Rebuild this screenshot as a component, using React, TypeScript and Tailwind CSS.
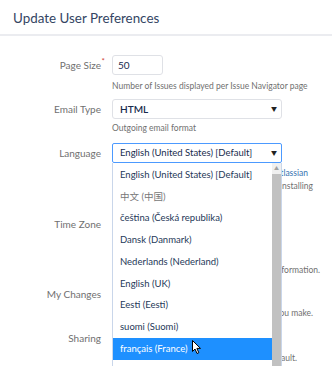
import React from 'react'

const languages = [
  'English (United States) [Default]',
  '中文 (中国)',
  'čeština (Česká republika)',
  'Dansk (Danmark)',
  'Nederlands (Nederland)',
  'English (UK)',
  'Eesti (Eesti)',
  'suomi (Suomi)',
  'français (France)',
  'Deutsch (Deutschland)',
]

function Arrow() {
  return <span className="text-[6px] leading-none text-[#222]">▼</span>
}

function Row({ label, required, children, className = '' }: { label: string; required?: boolean; children?: React.ReactNode; className?: string }) {
  return (
    <div className={`flex items-center ${className}`}>
      <div className="relative w-[101px] shrink-0 text-right text-[10px] text-[#707070]">
        {label}
        {required && <span className="absolute -right-[4px] -top-[3px] text-[8px] text-[#d04437]">*</span>}
      </div>
      <div className="ml-[11px] flex-1">{children}</div>
    </div>
  )
}

function Help({ children, className = '' }: { children: React.ReactNode; className?: string }) {
  return <div className={`ml-[112px] whitespace-nowrap text-[8.5px] leading-[13px] text-[#707070] ${className}`}>{children}</div>
}

export default function App() {
  return (
    <main className="relative h-[366px] w-[332px] overflow-hidden bg-white text-[#172b4d]" style={{ fontFamily: 'Lato, "Noto Sans", "Noto Sans CJK SC", sans-serif' }}>
      <header className="h-[36px] border-b-2 border-[#ebecf0] pl-[13px] pt-[8px]">
        <h1 className="text-[13.4px] leading-[20px] text-[#344563]">Update User Preferences</h1>
      </header>

      <form>
        <Row label="Page Size" required className="mt-[19px]">
          <div className="flex h-[20px] w-[51px] items-center rounded-[3px] border border-[#dfe1e6] px-[5px] text-[10px]">50</div>
        </Row>
        <Help className="mt-[5px]">Number of Issues displayed per Issue Navigator page</Help>

        <Row label="Email Type" className="mt-[6px]">
          <div className="flex h-[20px] w-[170px] items-center justify-between rounded-[3px] border border-[#dfe1e6] pl-[7px] pr-[4px] text-[10px] font-semibold">
            HTML <Arrow />
          </div>
        </Row>
        <Help className="mt-[3px]">Outgoing email format</Help>

        <Row label="Language" className="mt-[8px]">
          <div className="flex h-[20px] w-[170px] items-center justify-between rounded-[2px] border border-[#4c9aff] pl-[7px] pr-[4px] text-[9.5px]">
            English (United States) [Default] <Arrow />
          </div>
        </Row>
        <Help className="mt-[4px] w-[201px] text-right">
          <div className="pr-[5px]">
            Languages can be added from <span className="text-[#3572b0]">Atlassian</span>
          </div>
          <div>Marketplace by installing</div>
        </Help>

        <Row label="Time Zone" className="mt-[21px]">
          <div className="h-[20px]" />
        </Row>
        <Help className="mt-[30px] w-[208px] text-right">See the documentation for more information.</Help>

        <Row label="My Changes" className="mt-[7px]">
          <div className="h-[20px]" />
        </Row>
        <Help className="mt-[3px] w-[201px] text-right">Notify me of changes you make.</Help>

        <Row label="Sharing" className="mt-[8px]">
          <div className="h-[20px]" />
        </Row>
        <Help className="mt-[4px] w-[185px] text-right">Shared by default.</Help>
      </form>

      <div className="absolute left-[112px] top-[163px] flex w-[170px] border-x border-[#c9d6ea] bg-white">
        <ul className="flex-1 pt-[1px] text-[9.5px] text-[#253858]">
          {languages.map((lang, i) => (
            <li
              key={lang}
              className={`flex h-[21.75px] items-center whitespace-nowrap pl-[7px] ${i === 8 ? 'bg-[#1e90ff] text-white' : ''} ${i === 1 ? 'text-[#777]' : ''}`}
            >
              {lang}
            </li>
          ))}
        </ul>
        <div className="flex w-[9px] flex-col bg-[#f0f0f0]">
          <div className="flex h-[11px] items-center justify-center text-[5px] text-[#a0a0a0]">▲</div>
          <div className="flex-1 bg-[#c1c1c1]" />
        </div>
      </div>

      <svg className="absolute left-[192px] top-[340px]" width="10" height="15" viewBox="0 0 10 15">
        <path d="M0.5 0.5 L0.5 11.5 L3 9 L5 13.5 L6.8 12.7 L4.9 8.4 L8.5 8.4 Z" fill="white" stroke="black" strokeWidth="1" strokeLinejoin="round" />
      </svg>
    </main>
  )
}
